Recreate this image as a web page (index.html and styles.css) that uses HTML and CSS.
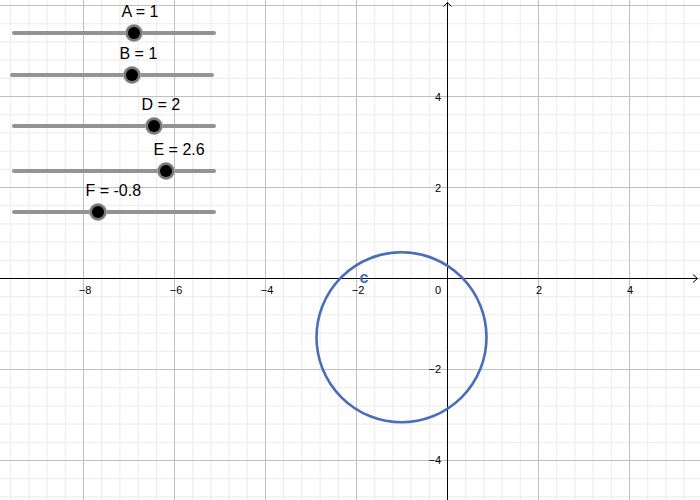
FILE: index.html
```html
<!DOCTYPE html>
<html lang="en">
<head>
<meta charset="utf-8">
<title>Graphics</title>
<link rel="stylesheet" href="styles.css">
</head>
<body>
<div class="board">
  <svg class="graph" width="700" height="500" viewBox="0 0 700 500" xmlns="http://www.w3.org/2000/svg">
    <defs>
      <pattern id="grid" x="447" y="278" width="91" height="91" patternUnits="userSpaceOnUse">
        <rect class="minor" x="18.2" y="0" width="1" height="91"/>
        <rect class="minor" x="36.4" y="0" width="1" height="91"/>
        <rect class="minor" x="54.6" y="0" width="1" height="91"/>
        <rect class="minor" x="72.8" y="0" width="1" height="91"/>
        <rect class="minor" x="0" y="18.2" width="91" height="1"/>
        <rect class="minor" x="0" y="36.4" width="91" height="1"/>
        <rect class="minor" x="0" y="54.6" width="91" height="1"/>
        <rect class="minor" x="0" y="72.8" width="91" height="1"/>
        <rect class="major" x="0" y="0" width="1" height="91"/>
        <rect class="major" x="0" y="0" width="91" height="1"/>
      </pattern>
    </defs>
    <rect x="0" y="0" width="700" height="500" fill="url(#grid)"/>

    <line class="axis" x1="0" y1="278.5" x2="697" y2="278.5"/>
    <polyline class="arrow" points="693,274.5 697.5,278.5 693,282.5"/>
    <line class="axis" x1="447.5" y1="2.5" x2="447.5" y2="500"/>
    <polyline class="arrow" points="443.5,6.5 447.5,2.5 451.5,6.5"/>

    <g class="ticks-x">
      <text x="85" y="294">−8</text>
      <text x="176" y="294">−6</text>
      <text x="267" y="294">−4</text>
      <text x="358" y="294">−2</text>
      <text x="539" y="294">2</text>
      <text x="630" y="294">4</text>
    </g>
    <g class="ticks-y">
      <text x="441" y="294">0</text>
      <text x="441" y="101">4</text>
      <text x="441" y="192">2</text>
      <text x="441" y="373">−2</text>
      <text x="441" y="464">−4</text>
    </g>

    <circle class="conic" cx="401.5" cy="337.2" r="85"/>
    <text class="conic-label" x="359.5" y="283">c</text>
  </svg>

  <div class="slider" style="left:11.5px;top:31px">
    <div class="rail">
      <span class="label" style="left:60%">A = 1</span>
      <span class="knob" style="left:60%"></span>
    </div>
  </div>
  <div class="slider" style="left:9.5px;top:73px">
    <div class="rail">
      <span class="label" style="left:60%">B = 1</span>
      <span class="knob" style="left:60%"></span>
    </div>
  </div>
  <div class="slider" style="left:11.5px;top:124px">
    <div class="rail">
      <span class="label" style="left:70%">D = 2</span>
      <span class="knob" style="left:70%"></span>
    </div>
  </div>
  <div class="slider" style="left:11.5px;top:169px">
    <div class="rail">
      <span class="label" style="left:76%">E = 2.6</span>
      <span class="knob" style="left:76%"></span>
    </div>
  </div>
  <div class="slider" style="left:11.5px;top:210px">
    <div class="rail">
      <span class="label" style="left:42%">F = -0.8</span>
      <span class="knob" style="left:42%"></span>
    </div>
  </div>
</div>
</body>
</html>
```

FILE: styles.css
```css
html, body {
  margin: 0;
  padding: 0;
  background: #ffffff;
}

body {
  font-family: "Liberation Sans", Arial, sans-serif;
  overflow: hidden;
}

.board {
  position: relative;
  width: 700px;
  height: 500px;
  overflow: hidden;
  background: #ffffff;
}

.graph {
  display: block;
}

.minor {
  fill: #ebebeb;
}

.major {
  fill: #c0c0c0;
}

.axis {
  stroke: #000000;
  stroke-width: 1;
  shape-rendering: crispEdges;
}

.arrow {
  fill: none;
  stroke: #000000;
  stroke-width: 1;
}

.ticks-x text,
.ticks-y text {
  font-family: "Liberation Sans", Arial, sans-serif;
  font-size: 11px;
  fill: #000000;
}

.ticks-x text {
  text-anchor: middle;
}

.ticks-y text {
  text-anchor: end;
}

.conic {
  fill: none;
  stroke: #4a6cbb;
  stroke-width: 2.6;
}

.conic-label {
  font-family: "Liberation Sans", Arial, sans-serif;
  font-size: 16px;
  font-weight: bold;
  fill: #4a6cbb;
}

.slider {
  position: absolute;
  width: 204px;
  height: 4px;
  border-radius: 2px;
  background: #939393;
}

.rail {
  position: relative;
  margin: 0 2px;
  height: 4px;
}

.knob {
  position: absolute;
  top: 2px;
  width: 12px;
  height: 12px;
  margin: -6px 0 0 -6px;
  border-radius: 50%;
  background: #000000;
  box-shadow: 0 0 0 2.2px #777777, 0 0 0 3px #a8a8a8;
}

.label {
  position: absolute;
  top: -27px;
  margin-left: -12px;
  font-size: 16px;
  line-height: 16px;
  color: #000000;
  white-space: nowrap;
}
```
